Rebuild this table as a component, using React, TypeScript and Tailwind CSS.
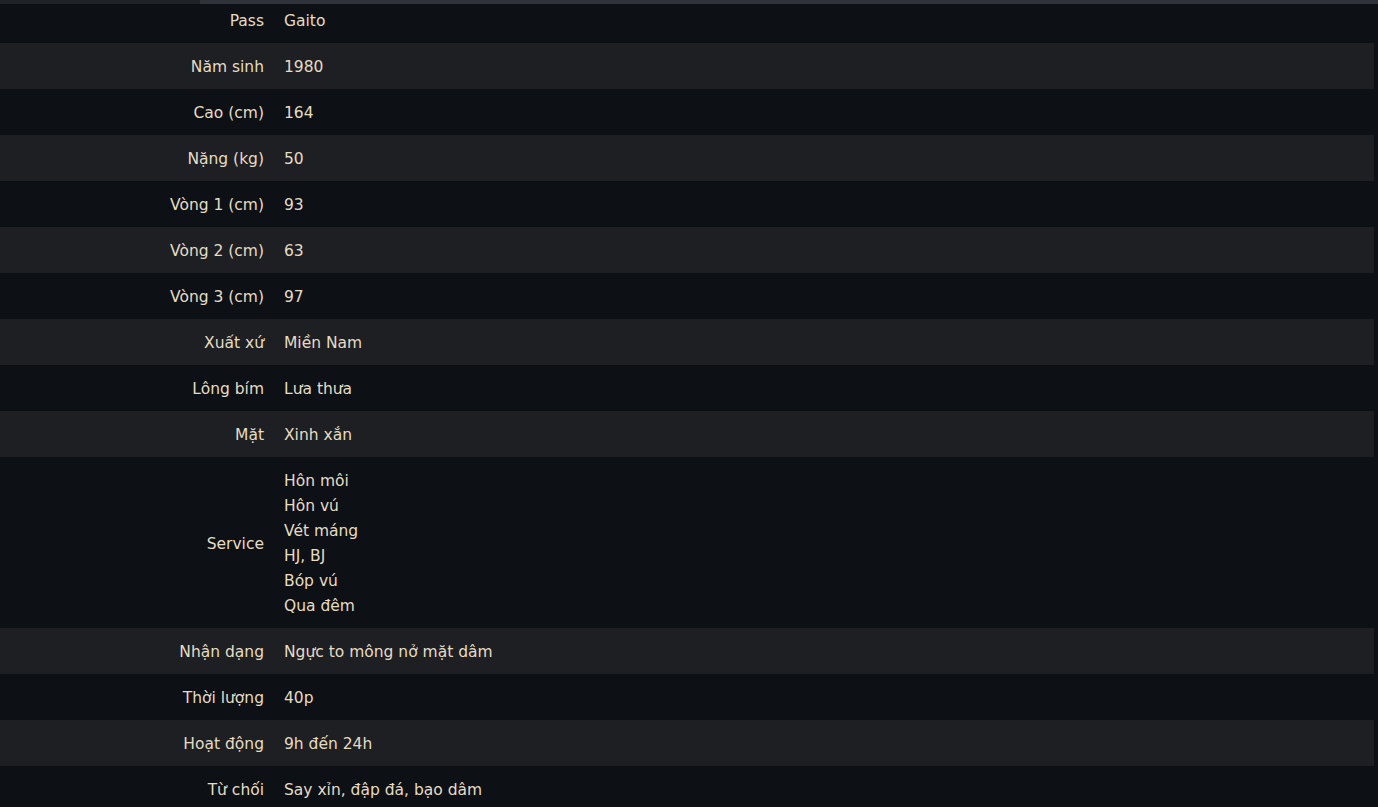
const rows: { label: string; value: string[] }[] = [
  { label: "Pass", value: ["Gaito"] },
  { label: "Năm sinh", value: ["1980"] },
  { label: "Cao (cm)", value: ["164"] },
  { label: "Nặng (kg)", value: ["50"] },
  { label: "Vòng 1 (cm)", value: ["93"] },
  { label: "Vòng 2 (cm)", value: ["63"] },
  { label: "Vòng 3 (cm)", value: ["97"] },
  { label: "Xuất xứ", value: ["Miền Nam"] },
  { label: "Lông bím", value: ["Lưa thưa"] },
  { label: "Mặt", value: ["Xinh xắn"] },
  { label: "Service", value: ["Hôn môi", "Hôn vú", "Vét máng", "HJ, BJ", "Bóp vú", "Qua đêm"] },
  { label: "Nhận dạng", value: ["Ngực to mông nở mặt dâm"] },
  { label: "Thời lượng", value: ["40p"] },
  { label: "Hoạt động", value: ["9h đến 24h"] },
  { label: "Từ chối", value: ["Say xỉn, đập đá, bạo dâm"] },
]

export default function App() {
  return (
    <div
      className="min-h-screen bg-[#0d1014] text-[#e6dcc4] text-[15.5px] overflow-hidden"
      style={{ fontFamily: '"DejaVu Sans", Verdana, sans-serif' }}
    >
      {/* top strip */}
      <div className="flex h-1">
        <div className="w-[200px] bg-[#1f2226]" />
        <div className="flex-1 bg-[#30343a]" />
      </div>

      <div className="w-[1374px]">
        {rows.map((row, i) => {
          const multi = row.value.length > 1
          const first = i === 0
          return (
            <div
              key={row.label}
              className={`flex items-center ${i % 2 === 1 ? "bg-[#1d1f23]" : "bg-[#0d1014]"} ${
                first ? "pt-[5px] pb-[10px]" : multi ? "pt-[12px] pb-[9px]" : "pt-[12px] pb-[10px]"
              }`}
            >
              <div className="w-[264px] shrink-0 text-right leading-6">{row.label}</div>
              <div className="pl-5">
                {row.value.map((v) => (
                  <div key={v} className={multi ? "leading-[25px]" : "leading-6"}>
                    {v}
                  </div>
                ))}
              </div>
            </div>
          )
        })}
      </div>
    </div>
  )
}
